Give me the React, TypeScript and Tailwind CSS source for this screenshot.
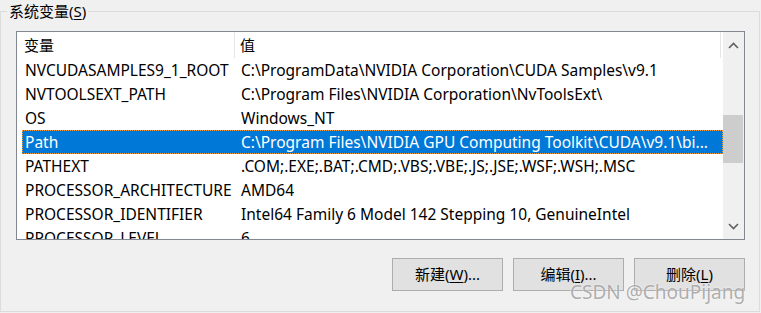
import { ReactNode } from "react";

const rows: [string, string][] = [
  ["NVCUDASAMPLES9_1_ROOT", "C:\\ProgramData\\NVIDIA Corporation\\CUDA Samples\\v9.1"],
  ["NVTOOLSEXT_PATH", "C:\\Program Files\\NVIDIA Corporation\\NvToolsExt\\"],
  ["OS", "Windows_NT"],
  ["Path", "C:\\Program Files\\NVIDIA GPU Computing Toolkit\\CUDA\\v9.1\\bi..."],
  ["PATHEXT", ".COM;.EXE;.BAT;.CMD;.VBS;.VBE;.JS;.JSE;.WSF;.WSH;.MSC"],
  ["PROCESSOR_ARCHITECTURE", "AMD64"],
  ["PROCESSOR_IDENTIFIER", "Intel64 Family 6 Model 142 Stepping 10, GenuineIntel"],
  ["PROCESSOR_LEVEL", "6"],
];

const font = "font-['Noto_Sans','Noto_Sans_CJK_SC',sans-serif]";

function Btn({ children }: { children: ReactNode }) {
  return (
    <button className="w-[111px] h-[33px] border border-[#adadad] bg-[#e1e1e1] text-[15px] text-black">
      {children}
    </button>
  );
}

function Chevron({ up }: { up?: boolean }) {
  return (
    <svg width="11" height="7" viewBox="0 0 11 7">
      <path
        d={up ? "M1 6 L5.5 1.5 L10 6" : "M1 1 L5.5 5.5 L10 1"}
        fill="none"
        stroke="#606060"
        strokeWidth="1.6"
      />
    </svg>
  );
}

export default function App() {
  return (
    <div className={`relative w-[761px] h-[313px] overflow-hidden bg-[#f0f0f0] ${font}`}>
      <fieldset className="w-[760px] h-[312px] border border-[#dcdcdc] flex flex-col">
        <legend className="ml-[6px] px-[2px] text-[15px] leading-[22px] text-black">
          系统变量(<span className="underline underline-offset-2">S</span>)
        </legend>

        {/* list view */}
        <div className="ml-[15px] mt-[9px] w-[729px] h-[209px] border border-[#828790] bg-white flex">
          <div className="w-[706px] h-full overflow-hidden flex flex-col">
            <div className="h-[26px] shrink-0 flex items-center text-[15px] text-black">
              <div className="w-[218px] h-full pl-[7px] pt-[1px] flex items-center border-r border-[#e5e5e5]">变量</div>
              <div className="w-[486px] h-full pl-[5px] pt-[1px] flex items-center border-r border-[#e5e5e5]">值</div>
            </div>
            <div className="pl-[5px] flex flex-col">
              {rows.map(([name, value]) => {
                const sel = name === "Path";
                return (
                  <div
                    key={name}
                    className={`h-[24px] shrink-0 flex items-center pl-[3px] pt-[1px] text-[15.5px] whitespace-nowrap ${
                      sel
                        ? "bg-[#0078d7] text-white outline outline-1 outline-dotted outline-[#f0a040] -outline-offset-1"
                        : "text-black"
                    }`}
                  >
                    <span className="w-[216px] shrink-0">{name}</span>
                    <span>{value}</span>
                  </div>
                );
              })}
            </div>
          </div>

          {/* scrollbar */}
          <div className="w-[21px] h-full bg-[#f0f0f0] flex flex-col">
            <div className="h-[26px] flex items-center justify-center pt-[1px]">
              <Chevron up />
            </div>
            <div className="flex-1">
              <div className="mt-[57px] w-[20px] h-[48px] bg-[#cdcdcd]" />
            </div>
            <div className="h-[24px] flex items-center justify-center pb-[2px]">
              <Chevron />
            </div>
          </div>
        </div>

        <div className="ml-[15px] mt-[18px] w-[729px] flex justify-end gap-[10px]">
          <Btn>
            新建(<span className="underline underline-offset-2">W</span>)...
          </Btn>
          <Btn>
            编辑(<span className="underline underline-offset-2">I</span>)...
          </Btn>
          <Btn>
            删除(<span className="underline underline-offset-2">L</span>)
          </Btn>
        </div>
      </fieldset>

      {/* watermark */}
      <div className="absolute left-[570px] top-[279px] text-[19px] leading-[26px] text-[#9a9a9a]/80 [text-shadow:0_0_2px_#ffffff]">
        CSDN @ChouPijang
      </div>
    </div>
  );
}
